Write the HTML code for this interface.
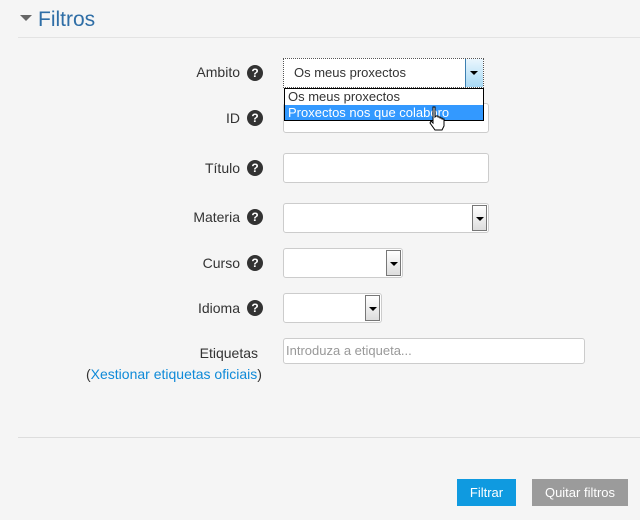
<!DOCTYPE html>
<html><head><style>
body{margin:0;width:640px;height:520px;background:#f5f5f5;font-family:"Liberation Sans",Arial,sans-serif;position:relative;overflow:hidden;font-size:14px;color:#333}
.a{position:absolute}
.lbl{position:absolute;right:400px;text-align:right;font-size:14px;color:#333}
.q{position:absolute;left:247px;width:16px;height:16px;border-radius:50%;background:#333;color:#fff;font-size:12px;font-weight:bold;text-align:center;line-height:16px}
.in{position:absolute;background:#fff;border:1px solid #ccc;border-radius:3px;box-sizing:border-box}
.ar{position:absolute;top:1px;bottom:1px;right:1px;width:15px;border:1px solid #777;box-sizing:border-box;background:linear-gradient(#fff,#ddd)}
.ar:after{content:"";position:absolute;left:3px;top:45%;border-left:4px solid transparent;border-right:4px solid transparent;border-top:4px solid #000}
</style></head><body>
<div class="a" style="left:20px;top:15px;border-left:6px solid transparent;border-right:6px solid transparent;border-top:6px solid #666"></div>
<div class="a" style="left:38px;top:8px;font-size:21px;color:#2f6ea6">Filtros</div>
<div class="a" style="left:18px;top:37px;width:622px;height:1px;background:#e3e3e3"></div>

<div class="lbl" style="top:64px">Ambito</div><div class="q" style="top:65px">?</div>
<div class="lbl" style="top:110px">ID</div><div class="q" style="top:110px">?</div>
<div class="lbl" style="top:160px">Título</div><div class="q" style="top:160px">?</div>
<div class="lbl" style="top:209px">Materia</div><div class="q" style="top:209px">?</div>
<div class="lbl" style="top:255px">Curso</div><div class="q" style="top:255px">?</div>
<div class="lbl" style="top:300px">Idioma</div><div class="q" style="top:300px">?</div>
<div class="lbl" style="top:345px;right:382px">Etiquetas</div>
<div class="a" style="left:86px;top:366px">(<span style="color:#0f8ad8">Xestionar etiquetas oficiais</span>)</div>

<div class="in" style="left:283px;top:103px;width:206px;height:30px"></div>
<div class="in" style="left:283px;top:153px;width:206px;height:30px"></div>
<div class="in" style="left:283px;top:203px;width:206px;height:30px"><div class="ar"></div></div>
<div class="in" style="left:283px;top:248px;width:120px;height:30px"><div class="ar"></div></div>
<div class="in" style="left:283px;top:293px;width:99px;height:30px"><div class="ar"></div></div>
<div class="in" style="left:283px;top:338px;width:302px;height:26px;color:#999;font-size:13px;padding:4px 2px">Introduza a etiqueta...</div>

<div class="a" style="left:283px;top:58px;width:201px;height:30px;background:#fff;border:1px dotted #555;box-sizing:border-box">
<div class="a" style="left:10px;top:6px;font-size:13px">Os meus proxectos</div>
<div class="a" style="right:0;top:0;bottom:0;width:17px;border-left:1px solid #3c7fb1;background:linear-gradient(#eaf6fd,#a7d9f5)"><div class="a" style="left:4px;top:12px;border-left:4px solid transparent;border-right:4px solid transparent;border-top:4px solid #000"></div></div>
</div>
<div class="a" style="left:284px;top:88px;width:200px;height:33px;background:#fff;border:1px solid #000;box-sizing:border-box;font-size:13px">
<div style="padding:0 3px;height:16px;line-height:16px">Os meus proxectos</div>
<div style="padding:0 3px;height:15px;line-height:15px;background:#3399ff;color:#fff">Proxectos nos que colaboro</div>
</div>
<svg class="a" style="left:428px;top:106px" width="20" height="26" viewBox="0 0 20 26"><path d="M5 1h2v10l1-1h2v1h2v1h2v1h2v7l-2 4H7l-5-7 1-2 2 2z" fill="#fff" stroke="#000"/></svg>

<div class="a" style="left:18px;top:437px;width:622px;height:1px;background:#ddd"></div>
<div class="a" style="left:457px;top:479px;width:59px;height:27px;background:#0f9ae0;color:#fff;font-size:13px;line-height:27px;text-align:center">Filtrar</div>
<div class="a" style="left:532px;top:479px;width:96px;height:27px;background:#9b9b9b;color:#fff;font-size:13px;line-height:27px;text-align:center">Quitar filtros</div>
</body></html>
